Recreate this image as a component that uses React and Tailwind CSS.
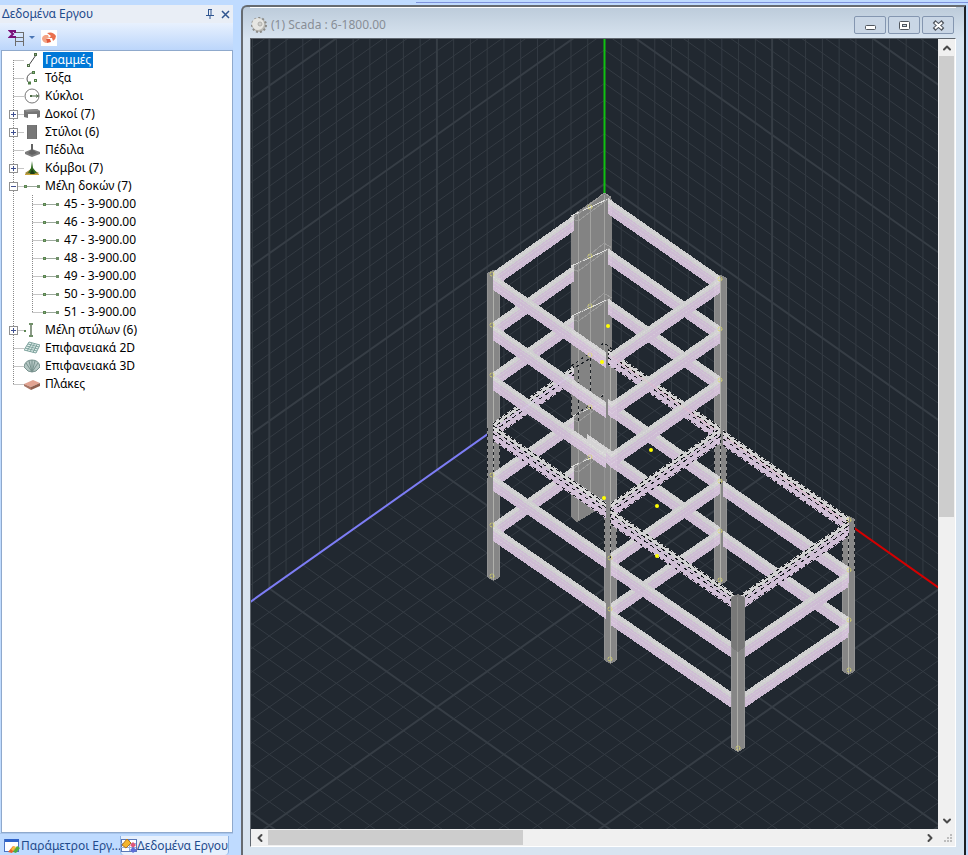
import React, { useState } from "react";
import { ChevronDown, ChevronLeft, ChevronRight, ChevronUp } from "lucide-react";

/* ---------- tree data ---------- */

const TREE = [
  { id: "lines", label: "Γραμμές", icon: "line" },
  { id: "arcs", label: "Τόξα", icon: "arc" },
  { id: "circles", label: "Κύκλοι", icon: "circle" },
  { id: "beams", label: "Δοκοί (7)", icon: "beam", expandable: true },
  { id: "columns", label: "Στύλοι (6)", icon: "column", expandable: true },
  { id: "footings", label: "Πέδιλα", icon: "footing" },
  { id: "nodes", label: "Κόμβοι (7)", icon: "node", expandable: true },
  {
    id: "beamMembers",
    label: "Μέλη δοκών (7)",
    icon: "member",
    expandable: true,
    children: [45, 46, 47, 48, 49, 50, 51].map((n) => ({
      id: `m${n}`,
      label: `${n} - 3-900.00`,
    })),
  },
  { id: "columnMembers", label: "Μέλη στύλων (6)", icon: "columnMember", expandable: true },
  { id: "surf2d", label: "Επιφανειακά 2D", icon: "mesh" },
  { id: "surf3d", label: "Επιφανειακά 3D", icon: "dome" },
  { id: "slabs", label: "Πλάκες", icon: "slab" },
];

/* ---------- icons ---------- */

const ICONS = {
  line: (
    <>
      <path d="M5 13 L12 3" stroke="#444" />
      <rect x="3.5" y="12.5" width="2" height="2" fill="#cfe3c0" stroke="#4e6b45" />
      <rect x="10.5" y="1.5" width="2" height="2" fill="#8fa884" stroke="#4e6b45" />
    </>
  ),
  arc: (
    <>
      <path d="M9 2.5 Q3 4 3 9 Q3 12 5 13" stroke="#555" fill="none" />
      <rect x="8.5" y="1.5" width="2" height="2" fill="#8fb884" stroke="#4e7b45" />
      <rect x="4.5" y="12" width="2" height="2" fill="#cfe3c0" stroke="#4e7b45" />
      <rect x="10.5" y="9.5" width="2" height="2" fill="#cfe3c0" stroke="#4e7b45" />
    </>
  ),
  circle: (
    <>
      <circle cx="8" cy="8" r="7" stroke="#777" fill="none" />
      <path d="M7 8 H15" stroke="#3f5f3a" />
      <rect x="6" y="7" width="2" height="2" fill="#4e6b45" />
      <path d="M12 6.5 L14 8 L12 9.5" stroke="#4e6b45" fill="none" />
    </>
  ),
  beam: (
    <>
      <path d="M0 4 L13 3 L16 5 L16 11 L13 12 L13 8 L4 8 L4 12 L0 11 Z" fill="#757575" />
      <path d="M0 4 L13 3 L16 5 L3 6 Z" fill="#8c8c8c" />
    </>
  ),
  column: (
    <>
      <rect x="3" y="1" width="10" height="14" fill="#777" />
      <path d="M3.5 1 V15 M12.5 1 V15" stroke="#6c6c6c" />
    </>
  ),
  footing: (
    <>
      <path d="M1 10 L8 7 L16 10 L16 12 L8 15 L1 12 Z" fill="#7c7c7c" />
      <path d="M7 2 H9 V8 L13 11 L8 13 L4 11 L7 8 Z" fill="#636363" />
    </>
  ),
  node: (
    <>
      <path d="M1 13 L7 9 L15 13 L12 15 L3 15 Z" fill="#a08a3a" />
      <path d="M8 1 L9 8 L13 13 H4 L7 8 Z" fill="#2f6a1f" />
      <path d="M6 14 L8 9 L11 14 Z" fill="#1d3d17" />
      <path d="M1 14.5 H15" stroke="#c9a53a" />
    </>
  ),
  member: (
    <>
      <path d="M2 8.5 H15" stroke="#9aa89a" />
      <rect x="0.5" y="7.5" width="2" height="2" fill="#7fae74" stroke="#5c8452" />
      <rect x="13" y="7" width="3" height="3" fill="#6f8f68" />
    </>
  ),
  columnMember: (
    <>
      <path d="M7 2 V14" stroke="#8b9a87" strokeWidth="2" />
      <path d="M5 2 H9 M5 14 H9" stroke="#6f8f68" strokeWidth="2" />
      <rect x="0" y="8" width="2" height="2" fill="#5c8452" />
    </>
  ),
  mesh: (
    <>
      <path d="M5 2 L16 5 L12 13 L0 10 Z" fill="#e2efec" />
      <path
        d="M5 2 L16 5 M4 4 L15 7 M2.5 6 L14 9 M1 8 L13 11 M0 10 L12 13 M5 2 L0 10 M8 3 L3 11 M10.5 3.5 L6 12 M13 4.5 L9 12.5 M16 5 L12 13"
        stroke="#7fa39e"
        fill="none"
      />
    </>
  ),
  dome: (
    <>
      <path d="M0 9 Q1 2 8 2 Q15 2 16 9 L12 13 Q8 15 4 13 Z" fill="#b4c6c3" />
      <path
        d="M0 9 Q1 2 8 2 Q15 2 16 9 L12 13 Q8 15 4 13 Z M8 14 L2 5 M8 14 L5 3 M8 14 V2 M8 14 L11 3 M8 14 L14 5"
        stroke="#77918d"
        fill="none"
      />
    </>
  ),
  slab: (
    <>
      <path d="M0 8 L9 4 L16 7 L7 11 Z" fill="#e2a391" />
      <path d="M0 8 L7 11 V14 L0 10 Z" fill="#a87565" />
      <path d="M7 11 L16 7 V10 L7 14 Z" fill="#8f5f4e" />
    </>
  ),
};

const ItemIcon = ({ name }) => (
  <svg width="16" height="16" viewBox="0 0 16 16" aria-hidden="true">
    {ICONS[name]}
  </svg>
);

const RootGuide = ({ first, last }) => (
  <svg width="22" height="18" viewBox="0 0 22 18" aria-hidden="true">
    <path
      d={`M11.5 ${first ? 9 : 0} V${last ? 10 : 18} M11.5 9.5 H22`}
      stroke="#8a8a8a"
      strokeDasharray="1 1"
      fill="none"
    />
  </svg>
);

const ChildGuide = ({ last }) => (
  <svg width="41" height="18" viewBox="0 0 41 18" aria-hidden="true">
    <path
      d={`M11.5 0 V18 M30.5 0 V${last ? 10 : 18} M30.5 9.5 H41`}
      stroke="#8a8a8a"
      strokeDasharray="1 1"
      fill="none"
    />
  </svg>
);

const ExpandGuide = ({ open }) => (
  <svg width="22" height="18" viewBox="0 0 22 18" aria-hidden="true">
    <path d="M11.5 0 V18 M11.5 9.5 H22" stroke="#8a8a8a" strokeDasharray="1 1" />
    <rect x="7.5" y="5.5" width="8" height="8" fill="#fff" stroke="#919191" />
    <path d={open ? "M9 9.5 H14" : "M9 9.5 H14 M11.5 7 V12"} stroke="#3f4f8f" />
  </svg>
);

/* ---------- project panel ---------- */

const Label = ({ selected, onClick, children }) => (
  <button
    type="button"
    onClick={onClick}
    className={`ml-[3px] h-4 whitespace-nowrap px-[2px] leading-4 ${
      selected ? "bg-[#0078d7] text-white" : "text-black"
    }`}
  >
    {children}
  </button>
);

const ProjectTree = () => {
  const [selected, setSelected] = useState("lines");
  const [open, setOpen] = useState({ beamMembers: true });

  return (
    <ul className="min-h-0 flex-1 overflow-hidden border border-[#8fa9cc] bg-white text-[12px]">
      {TREE.map((item, i) => (
        <li key={item.id}>
          <div className="flex h-[18px] items-center">
            {item.expandable ? (
              <button
                type="button"
                aria-label={item.label}
                onClick={() => setOpen({ ...open, [item.id]: !open[item.id] })}
              >
                <ExpandGuide open={open[item.id]} />
              </button>
            ) : (
              <RootGuide first={i === 0} last={i === TREE.length - 1} />
            )}
            <ItemIcon name={item.icon} />
            <Label selected={selected === item.id} onClick={() => setSelected(item.id)}>
              {item.label}
            </Label>
          </div>
          {item.children && open[item.id] && (
            <ul>
              {item.children.map((child, c) => (
                <li key={child.id} className="flex h-[18px] items-center">
                  <ChildGuide last={c === item.children.length - 1} />
                  <ItemIcon name="member" />
                  <Label selected={selected === child.id} onClick={() => setSelected(child.id)}>
                    {child.label}
                  </Label>
                </li>
              ))}
            </ul>
          )}
        </li>
      ))}
    </ul>
  );
};

const ProjectPanel = () => (
  <aside className="flex w-[234px] shrink-0 flex-col pr-px">
    <header className="flex h-[18px] items-center bg-[#e9eef6] pl-[2px] text-[12px] text-[#1f4b8c]">
      <h2 className="flex-1 leading-4">Δεδομένα Εργου</h2>
      <button type="button" aria-label="Pin" className="px-1">
        <svg width="8" height="10" viewBox="0 0 8 10">
          <path d="M2.5 1 V6 M5 1 V6 M2 0.5 H6 M0 6.5 H8 M4 7 V10" stroke="#2f5590" fill="none" />
        </svg>
      </button>
      <button type="button" aria-label="Close" className="px-[3px]">
        <svg width="9" height="9" viewBox="0 0 9 9">
          <path d="M1 1 L8 8 M8 1 L1 8" stroke="#2f5590" strokeWidth="1.5" />
        </svg>
      </button>
    </header>

    <div className="flex h-[27px] shrink-0 items-center gap-[6px] bg-linear-to-b from-[#e8f1fe] to-[#bcd6fb] pl-2 pt-[2px]">
      <button type="button" aria-label="Summary" className="flex items-center gap-1">
        <svg width="17" height="17" viewBox="0 0 17 17">
          <path
            d="M8 3.5 H16 M7 8.5 H16 M7 12.5 H16 M7.5 9 V17 M15.5 3 V17"
            stroke="#6d6d6d"
            fill="none"
          />
          <path d="M7 4 V2 H2 L5 5 L2 8 H7 V7" stroke="#7a0f78" strokeWidth="2" fill="none" />
        </svg>
        <svg width="6" height="4" viewBox="0 0 6 4">
          <path d="M0 0 H6 L3 3 Z" fill="#4a76b5" />
        </svg>
      </button>
      <button type="button" aria-label="Refresh" className="bg-white">
        <svg width="16" height="16" viewBox="0 0 16 16">
          <path d="M1 9 Q1 6 4 5 L7 5 L8 8 L5 9 L6 13 Q2 13 1 9 Z" fill="#f4a384" />
          <path d="M6 3 Q12 1 15 6 Q15 9 12 11 L11 8 L8 8 L10 6 Z" fill="#e9704e" />
          <path d="M5 9 L9 9 L10 12 L6 13 Z" fill="#e0573a" />
        </svg>
      </button>
    </div>

    <div className="flex min-h-0 flex-1 flex-col pl-px">
      <ProjectTree />
    </div>

    <nav className="flex h-[22px] shrink-0 border-t border-[#a9c6ec] pl-[2px] pr-1 pt-[2px] text-[12px] text-[#1f4b8c]">
      <button
        type="button"
        className="flex w-[118px] shrink-0 items-center gap-px whitespace-nowrap pl-[2px]"
      >
        <svg width="16" height="16" viewBox="0 0 16 16" className="shrink-0">
          <rect x="0.5" y="1.5" width="14" height="12" fill="#fff" stroke="#4b74c4" />
          <rect x="1" y="1" width="14" height="3" fill="#2e62c8" />
          <path d="M4 14 L9 8 L12 10 L8 15 Z" fill="#e8622c" />
          <path d="M9 14 L13 8 L16 10 L12 15 Z" fill="#4fae3c" />
          <path d="M7 11 L10 8 L12 9 L9 13 Z" fill="#f6c13c" />
        </svg>
        <span>Παράμετροι Εργ...</span>
      </button>
      <button
        type="button"
        className="flex flex-1 items-center whitespace-nowrap rounded-b-sm border-x border-[#8db2e3] bg-[#e6f0fd]"
      >
        <svg width="16" height="16" viewBox="0 0 16 16" className="shrink-0">
          <rect x="0.5" y="1.5" width="15" height="12" fill="#fff" stroke="#5b79b8" />
          <path d="M0 5.5 H15 M0 9.5 H15 M8.5 2 V13" stroke="#9bb0d8" />
          <path d="M1 7 L6 1 L10 5 L5 10 Z" fill="#f3b52d" stroke="#b5761a" />
          <path d="M9 7 L12 4 L15 7 L12 10 Z" fill="#e0567a" />
          <path d="M9 12 L12 9 L16 12 L12 15 Z" fill="#5d6fd8" />
        </svg>
        <span>Δεδομένα Εργου</span>
      </button>
    </nav>
  </aside>
);

/* ---------- 3D view ---------- */

const OX = 604.5;
const OY = 351.5;
const STEP = 16.76;
const SLOPE = 0.7071;
const FLOOR = 50.2;

const GridLines = () => {
  const minor = [];
  const major = [];
  for (let i = 1; i <= 80; i++) {
    const target = i % 10 === 0 ? major : minor;
    const d = i * STEP;
    const y = OY + d * SLOPE;
    const far = 1400;
    [-1, 1].forEach((s) => {
      // wall verticals, wall horizontals, floor lines
      target.push(`M${OX + s * d} -400 V${y}`);
      target.push(`M${OX} ${OY - d} l${s * far} ${far * SLOPE}`);
      target.push(`M${OX + s * d} ${y} l${-s * far} ${far * SLOPE}`);
    });
  }
  return (
    <g fill="none">
      <path d={minor.join(" ")} stroke="#343b43" />
      <path d={major.join(" ")} stroke="#363d45" strokeWidth="2" />
    </g>
  );
};

// end points of the upper edge of each beam on the top level it exists on
const BEAM_LINES = [
  { x1: 493, y1: 272, x2: 574, y2: 215, top: 6 },
  { x1: 608, y1: 198, x2: 720, y2: 276, top: 6 },
  { x1: 723, y1: 430, x2: 849, y2: 517, top: 3 },
  { x1: 493, y1: 274, x2: 606, y2: 352, top: 6 },
  { x1: 611, y1: 352, x2: 720, y2: 277, top: 6 },
  { x1: 611, y1: 509, x2: 735, y2: 594, top: 3 },
  { x1: 741, y1: 594, x2: 848, y2: 521, top: 3 },
];

const COLUMNS = [
  { x: 487, w: 13, top: 273, bottom: 577, dash: 428 },
  { x: 714, w: 13, top: 278, bottom: 581, dash: 434 },
  { x: 604, w: 13, top: 360, bottom: 660, dash: 508 },
  { x: 842, w: 13, top: 519, bottom: 671, dash: 521 },
];

const NODES = [
  ...[274, 325, 375, 475, 525, 576].map((y) => [492, y]),
  ...[279, 329, 380, 481, 531, 580].map((y) => [720, y]),
  ...[207, 256, 306, 355, 407, 457].map((y) => [590, y]),
  ...[558, 609, 659].map((y) => [610, y]),
  ...[520, 570, 620, 670].map((y) => [849, y]),
  ...[748].map((y) => [738, y]),
];

const POINTS = [
  [608, 326],
  [602, 362],
  [651, 450],
  [657, 506],
  [604, 498],
  [657, 556],
];

const Beam = ({ x1, y1, x2, y2, selected }) => {
  const band = (a, b) => `${x1},${y1 + a} ${x2},${y2 + a} ${x2},${y2 + b} ${x1},${y1 + b}`;
  const edge = (d) => `M${x1} ${y1 + d} L${x2} ${y2 + d}`;
  return (
    <g>
      <polygon points={band(0, 6)} fill="#d9d8d9" />
      <polygon points={band(6, 16)} fill="#d8c4dd" />
      <path d={edge(3)} stroke="#e2e1e0" strokeDasharray="2 1" />
      <path d={edge(8)} stroke="#d9cfdc" />
      <path d={edge(12)} stroke="#decfe2" strokeDasharray="2 1" />
      {selected && (
        <>
          <path d={edge(1)} stroke="#15181c" strokeDasharray="4 3" />
          <path d={edge(5)} stroke="#15181c" strokeDasharray="4 4" strokeDashoffset="3" />
          <path d={edge(9)} stroke="#15181c" strokeDasharray="4 4" />
          <path d={edge(15)} stroke="#15181c" strokeDasharray="3 4" />
        </>
      )}
    </g>
  );
};

const Column = ({ x, w, top, bottom, dash }) => (
  <g>
    <polygon
      points={`${x},${top} ${x + w / 2},${top - 3} ${x + w},${top} ${x + w},${bottom} ${x + w / 2},${bottom + 4} ${x},${bottom}`}
      fill="#868686"
    />
    <path d={`M${x + 6.5} ${top} V${bottom + 3}`} stroke="#b0b0ac" />
    <path d={`M${x + 0.5} ${top} V${bottom} M${x + w - 0.5} ${top} V${bottom}`} stroke="#939393" />
    {dash && (
      <path
        d={`M${x + 0.5} ${dash} v50 M${x + 6.5} ${dash} v50 M${x + w - 0.5} ${dash} v50`}
        stroke="#1b1f24"
        strokeDasharray="3 3"
      />
    )}
  </g>
);

const ShearWall = () => (
  <g>
    <polygon points="571,216 604,193 612,199 612,506 604,506 577,522 571,517" fill="#838383" />
    <path d="M578.5 212 V520 M590.5 207 V510 M604.5 195 V506" stroke="#a2a2a0" />
    {[0, 1, 2, 4, 5].map((k) => (
      <g key={k} fill="none">
        <path d={`M571 ${216 + k * FLOOR} L608 ${199 + k * FLOOR}`} stroke="#dededc" />
        <path d={`M572 ${219 + k * FLOOR} l6 2 L611 ${197 + k * FLOOR} l-7 -4 Z`} stroke="#9c9c9c" />
      </g>
    ))}
    <path
      d="M571 366 L604 343 L612 349 M571 370 L604 350 M571.5 367 V418 M578.5 370 V421 M590.5 358 V410 M571 418 L604 395"
      stroke="#1b1f24"
      strokeDasharray="3 3"
      fill="none"
    />
  </g>
);

const FrameModel = () => (
  <g shapeRendering="crispEdges">
    <ShearWall />
    {COLUMNS.map((c) => (
      <Column key={c.x} {...c} />
    ))}
    <g opacity="0.95">
      <Beam x1={587} y1={434} x2={612} y2={451} />
      {BEAM_LINES.map((b) =>
        Array.from({ length: b.top }, (_, k) => (
          <Beam
            key={`${b.x1}-${b.y1}-${k}`}
            x1={b.x1}
            x2={b.x2}
            y1={b.y1 + k * FLOOR}
            y2={b.y2 + k * FLOOR}
            selected={b.top - k === 3}
          />
        ))
      )}
    </g>
    <Column x={731} w={14} top={597} bottom={748} />
    <path d="M731 598 l7 -4 l7 4 V647 l-7 5 l-7 -5 Z" fill="#6a6a6a" opacity="0.5" />
  </g>
);

const ModelView = () => (
  <svg
    className="block h-full w-full bg-[#212830]"
    viewBox="251 39 687 790"
    preserveAspectRatio="xMinYMin slice"
    role="img"
    aria-label="Scada"
  >
    <GridLines />
    <path d={`M${OX} ${OY} V-400`} stroke="#10c010" strokeWidth="2" />
    <path d={`M${OX} ${OY} l-1400 ${1400 * SLOPE}`} stroke="#7d7df5" strokeWidth="2" />
    <path d={`M${OX} ${OY} l1400 ${1400 * SLOPE}`} stroke="#d40000" strokeWidth="2" />
    <FrameModel />
    {NODES.map(([x, y]) => (
      <circle
        key={`${x}-${y}`}
        cx={x}
        cy={y}
        r="2"
        fill="none"
        stroke="#dedb6a"
        strokeDasharray="2 1"
      />
    ))}
    {POINTS.map(([x, y]) => (
      <circle key={`${x}-${y}`} cx={x} cy={y} r="2" fill="#ffff00" />
    ))}
  </svg>
);

/* ---------- document window ---------- */

const WindowButton = ({ label, children }) => (
  <button
    type="button"
    aria-label={label}
    className="flex h-[18px] w-8 items-center justify-center rounded-xs border border-[#8496b0] bg-[#c9d6e5]"
  >
    <svg width="13" height="11" viewBox="0 0 13 11">
      {children}
    </svg>
  </button>
);

const ScrollButton = ({ label, icon: Icon }) => (
  <button
    type="button"
    aria-label={label}
    className="flex size-[17px] shrink-0 items-center justify-center text-[#4a4a4a]"
  >
    <Icon size={12} strokeWidth={4} />
  </button>
);

const DocumentWindow = () => (
  <main className="flex min-w-0 flex-1 flex-col rounded-tl-md border-l-2 border-r-2 border-t-2 border-[#666b70] border-r-[#1c1f22] bg-linear-to-b from-[#bccbda] to-[#d8e4f0] to-[32px] pb-[8px] pl-[7px] pr-[8px]">
    <header className="flex h-[31px] shrink-0 items-center gap-[3px] border-t border-white pt-1">
      <svg width="18" height="18" viewBox="0 0 18 18" aria-hidden="true">
        <circle cx="9" cy="9" r="7" fill="#b9b9b5" />
        <circle cx="9" cy="9" r="7" fill="none" stroke="#8b8b88" strokeWidth="2" strokeDasharray="2 2" />
        <circle cx="8" cy="8" r="6" fill="#e6e6e2" />
        <circle cx="10" cy="8" r="2" fill="#cfcfcb" stroke="#b0b0ac" />
      </svg>
      <h1 className="flex-1 truncate text-[12px] text-[#888e96]">(1) Scada : 6-1800.00</h1>
      <div className="flex gap-[2px] pr-[2px]">
        <WindowButton label="Minimize">
          <rect x="1.5" y="5.5" width="10" height="4" rx="1" fill="#fff" stroke="#50565e" />
        </WindowButton>
        <WindowButton label="Restore">
          <rect x="1.5" y="1.5" width="10" height="8" rx="1" fill="#fff" stroke="#50565e" />
          <rect x="4.5" y="4.5" width="4" height="2" fill="#c9d6e5" stroke="#50565e" />
        </WindowButton>
        <WindowButton label="Close">
          <path d="M2 1.5 L11 9.5 M11 1.5 L2 9.5" stroke="#50565e" strokeWidth="4" />
          <path d="M3 2.5 L10 8.5 M10 2.5 L3 8.5" stroke="#fff" strokeWidth="2" />
        </WindowButton>
      </div>
    </header>

    <div className="grid min-h-0 flex-1 grid-cols-[minmax(0,1fr)_17px] grid-rows-[minmax(0,1fr)_17px] border border-b-white border-l-[#5f666e] border-r-white border-t-[#5f666e] bg-[#f0f0f0]">
      <div className="min-h-0 overflow-hidden">
        <ModelView />
      </div>
      <div className="flex min-h-0 flex-col">
        <ScrollButton label="Scroll up" icon={ChevronUp} />
        <div className="min-h-0 flex-1 px-px">
          <div className="h-[61%] bg-[#cdcdcd]" />
        </div>
        <ScrollButton label="Scroll down" icon={ChevronDown} />
      </div>
      <div className="flex min-w-0">
        <ScrollButton label="Scroll left" icon={ChevronLeft} />
        <div className="min-w-0 flex-1 py-px">
          <div className="h-full w-[39%] bg-[#cdcdcd]" />
        </div>
        <ScrollButton label="Scroll right" icon={ChevronRight} />
      </div>
      <svg width="17" height="17" viewBox="0 0 17 17" aria-hidden="true">
        <path
          d="M12 5 h2 v2 h-2 Z M9 8 h2 v2 h-2 Z M12 8 h2 v2 h-2 Z M6 11 h2 v2 h-2 Z M9 11 h2 v2 h-2 Z M12 11 h2 v2 h-2 Z"
          fill="#bdbdbd"
        />
      </svg>
    </div>
  </main>
);

const App = () => (
  <div className="flex h-screen flex-col overflow-hidden bg-[#bfdbff] font-['Noto_Sans','Open_Sans',sans-serif]">
    <div className="flex h-[5px] shrink-0 items-center">
      <div className="ml-[43%] h-px flex-1 bg-[#7f93dc]" />
    </div>
    <div className="flex min-h-0 flex-1 pr-[2px]">
      <ProjectPanel />
      <div className="w-[7px] shrink-0" />
      <DocumentWindow />
    </div>
  </div>
);

export default App;
